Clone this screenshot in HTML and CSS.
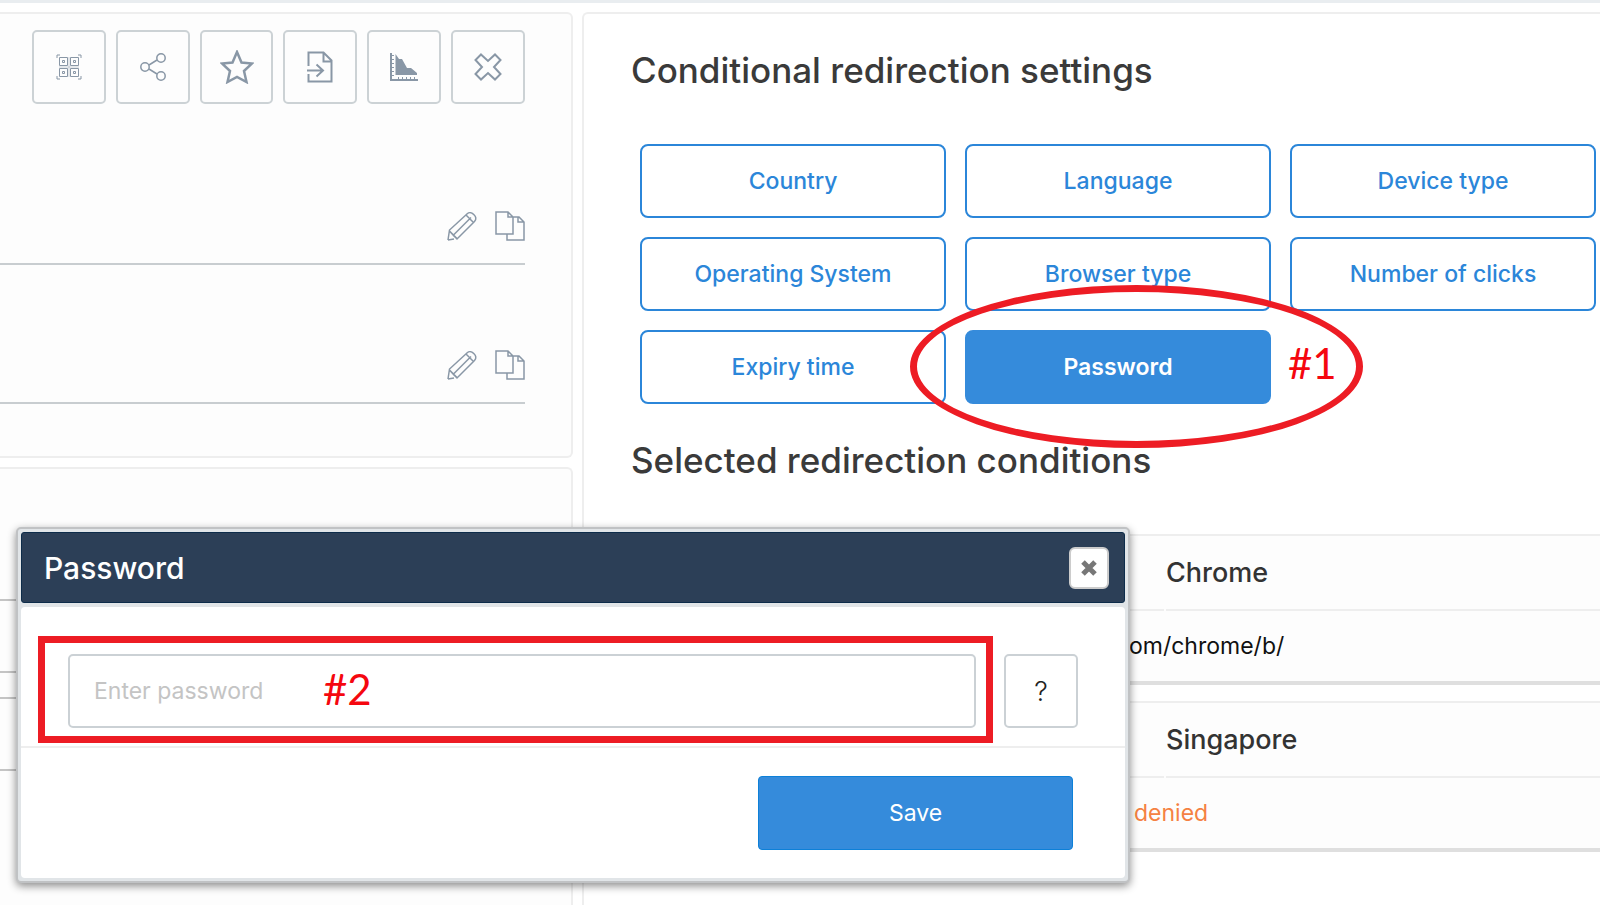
FILE: index.html
```html
<!DOCTYPE html>
<html lang="en">
  <head>
    <meta charset="UTF-8" />
    <meta name="viewport" content="width=device-width, initial-scale=1.0" />
    <title>Conditional redirection settings</title>
    <link rel="stylesheet" href="styles.css">
  </head>
  <body>
    <!-- Shared icons -->
    <svg class="sprite" aria-hidden="true">
      <symbol id="icon-pencil" viewBox="0 0 30 30">
        <path d="M1 29 2.500 19 20.500 2.500C24-.5 32 6 27.500 10.500L10 28 6.500 24.500 2.500 20M1 29l6-1M6.500 24 24 6.500M19 4l7.500 7.500M2.500 20l7.500 7.500" />
      </symbol>
      <symbol id="icon-copy" viewBox="0 0 30 30">
        <path d="M1 1h12l5 5v17H1zM13 1v5h5M18 6h6l5 5v18H12v-6M23 6v5h6" />
      </symbol>
    </svg>

    <div class="page">
      <div class="sidebar">
        <section class="panel link-panel">
          <div class="toolbar">
            <button class="tool-btn" aria-label="QR code">
              <svg width="26" height="26" viewBox="0 0 26 26" class="thin">
                <path d="M1 4V1h3M22 1h3v3M25 22v3h-3M4 25H1v-3" />
                <path d="M13 3v20M3 13h20" class="faint" />
                <path d="M3.500 3.500h8v8h-8zM14.500 3.500h8v8h-8zM3.500 14.500h8v8h-8zM14.500 14.500h8v8h-8z" />
                <path d="M6.500 6.500h2v2h-2zM17.500 6.500h2v2h-2zM6.500 17.500h2v2h-2zM17.500 17.500h2v2h-2z" />
              </svg>
            </button>
            <button class="tool-btn" aria-label="Share">
              <svg width="26" height="28" viewBox="0 0 26 28">
                <circle cx="5" cy="14" r="4.200" /><circle cx="21" cy="5" r="4.200" /><circle cx="21" cy="23" r="4.200" />
                <path d="m9 12 8-5M9 16l8 5" />
              </svg>
            </button>
            <button class="tool-btn" aria-label="Favourite">
              <svg width="34" height="34" viewBox="0 0 34 34" class="bold">
                <path d="m17 2 4.500 10.500L32 13.500l-8 7.500 2.500 11L17 27l-9.500 5L10 21l-8-7.500 10.500-1z" />
              </svg>
            </button>
            <button class="tool-btn" aria-label="Export">
              <svg width="26" height="32" viewBox="0 0 26 32" class="medium">
                <path d="M1.500 15V1.500h15l8 8V30.500h-23V23M16.500 1.500v9h8M0 19.500h16M9.500 13.500l6.500 6-6.500 6" />
              </svg>
            </button>
            <button class="tool-btn" aria-label="Statistics">
              <svg width="28" height="28" viewBox="0 0 28 28" class="solid">
                <path d="M0 0h2v26h26v2H0zM5.500 1 9 6h3l5 9h4l6 5v2H5.500z" />
                <path d="M2 2h2v1H2zM2 6h2v1H2zM2 10h2v1H2zM2 14h2v1H2zM2 18h2v1H2zM2 22h2v1H2zM8 24h1v2H8zM12 24h1v2h-1zM16 24h1v2h-1zM20 24h1v2h-1zM24 24h1v2h-1z" />
              </svg>
            </button>
            <button class="tool-btn" aria-label="Delete">
              <svg width="28" height="28" viewBox="0 0 28 28" class="medium">
                <path d="m7 1.500 7 6.500 7-6.500L26.500 7 20 14l6.500 7-5.500 5.500-7-6.500-7 6.500L1.500 21 8 14 1.500 7z" />
              </svg>
            </button>
          </div>
          <div class="field-row">
            <button class="icon-btn" aria-label="Edit"><svg width="30" height="30"><use href="#icon-pencil" /></svg></button>
            <button class="icon-btn" aria-label="Copy"><svg width="30" height="30"><use href="#icon-copy" /></svg></button>
          </div>
          <div class="field-row">
            <button class="icon-btn" aria-label="Edit"><svg width="30" height="30"><use href="#icon-pencil" /></svg></button>
            <button class="icon-btn" aria-label="Copy"><svg width="30" height="30"><use href="#icon-copy" /></svg></button>
          </div>
        </section>
        <section class="panel list-panel">
          <div class="list-item"></div>
          <div class="list-item"></div>
        </section>
      </div>

      <main class="panel settings">
        <h2 class="heading">Conditional redirection settings</h2>
        <div class="conditions">
          <button class="condition-btn">Country</button>
          <button class="condition-btn">Language</button>
          <button class="condition-btn">Device type</button>
          <button class="condition-btn">Operating System</button>
          <button class="condition-btn">Browser type</button>
          <button class="condition-btn">Number of clicks</button>
          <button class="condition-btn">Expiry time</button>
          <button class="condition-btn active">Password</button>
        </div>
        <h2 class="heading">Selected redirection conditions</h2>
        <div class="rules">
          <article class="rule">
            <div class="rule-head"><span></span><h3>Chrome</h3></div>
            <p class="rule-body">om/chrome/b/</p>
          </article>
          <article class="rule">
            <div class="rule-head"><span></span><h3>Singapore</h3></div>
            <p class="rule-body denied">denied</p>
          </article>
        </div>
      </main>
    </div>

    <!-- Step 1 -->
    <div class="mark-ellipse"></div>
    <span class="mark-label step-one">#1</span>

    <!-- Password dialog -->
    <div class="dialog" role="dialog" aria-labelledby="dialog-title">
      <div class="dialog-header">
        <h2 id="dialog-title">Password</h2>
        <button class="close-btn" aria-label="Close">
          <svg width="18" height="18" viewBox="0 0 18 18"><path d="m3 3 12 12M15 3 3 15" /></svg>
        </button>
      </div>
      <form class="dialog-body">
        <div class="input-row">
          <input type="text" class="password-input" placeholder="Enter password" aria-label="Enter password" />
          <button type="button" class="help-btn">?</button>
        </div>
        <div class="dialog-footer">
          <button type="button" class="save-btn">Save</button>
        </div>
      </form>
      <!-- Step 2 -->
      <div class="mark-box"></div>
      <span class="mark-label step-two">#2</span>
    </div>
  </body>
</html>
```
FILE: styles.css
```css
* {
  box-sizing: border-box;
}

body {
  margin: 0;
  height: 100vh;
  position: relative;
  overflow: hidden;
  font-family: Inter, sans-serif;
  font-size: 23px;
  color: #333;
  background: #fff;
  border-top: 3px solid #e9edf0;
}

h2,
h3,
p {
  margin: 0;
  font-weight: 500;
}

button,
input {
  font: inherit;
}

svg {
  display: block;
  fill: none;
  stroke: #8997a6;
  stroke-width: 1.5;
}

.sprite {
  position: absolute;
  width: 0;
  height: 0;
}

.page {
  display: grid;
  grid-template-columns: 573px 1fr;
  gap: 9px;
  height: 100%;
  padding-top: 9px;
}

.panel {
  background: #fdfdfd;
  border: 2px solid #eee;
  border-radius: 6px;
}

/* Left column */
.sidebar {
  display: flex;
  flex-direction: column;
  gap: 9px;
}

.link-panel,
.list-panel {
  border-left: none;
  border-top-left-radius: 0;
  border-bottom-left-radius: 0;
}

.link-panel {
  padding: 16px 46px 52px 0;
}

.toolbar {
  display: flex;
  gap: 10px;
  padding-left: 32px;
  margin-bottom: 22px;
}

.tool-btn {
  flex: 1;
  height: 74px;
  display: flex;
  align-items: center;
  justify-content: center;
  padding: 0;
  background: #fdfdfd;
  border: 2px solid #ccd2d5;
  border-radius: 5px;
}

.tool-btn .thin {
  stroke-width: 1;
}

.tool-btn .faint {
  opacity: 0.4;
}

.tool-btn .medium {
  stroke-width: 2;
}

.tool-btn .bold {
  stroke-width: 2.5;
}

.tool-btn .solid {
  fill: #8997a6;
  stroke: none;
}

.field-row {
  display: flex;
  justify-content: flex-end;
  align-items: flex-end;
  gap: 18px;
  height: 139px;
  padding-bottom: 22px;
  border-bottom: 2px solid #c8cdd0;
}

.icon-btn {
  padding: 0;
  border: none;
  background: none;
}

.list-panel {
  flex: 1;
  border-bottom: none;
  border-bottom-right-radius: 0;
  padding: 130px 46px 0 0;
}

.list-item {
  height: 74px;
  margin-bottom: 24px;
  border: 2px solid #c4c4c4;
  border-left: none;
}

/* Right column */
.settings {
  border-right: none;
  border-bottom: none;
  border-radius: 6px 0 0 0;
  background: #fff;
  padding: 33px 0 0 47px;
}

.heading {
  font-size: 35px;
  line-height: 46px;
  color: #3a3a3a;
}

.conditions {
  display: grid;
  grid-template-columns: repeat(3, 1fr);
  gap: 19px;
  padding: 51px 4px 33px 9px;
}

.condition-btn {
  height: 74px;
  padding: 0;
  font-weight: 500;
  color: #2b86d9;
  background: #fff;
  border: 2px solid #2b86d9;
  border-radius: 8px;
}

.condition-btn.active {
  color: #fff;
  font-weight: 600;
  background: #358bdb;
  border-color: #358bdb;
}

.rules {
  padding-top: 51px;
}

.rule {
  margin-bottom: 16px;
  background: #fdfdfd;
  border-top: 2px solid #eee;
  border-bottom: 4px solid #dfdfdf;
}

.rule-head {
  display: grid;
  grid-template-columns: 533px 1fr;
  gap: 2px;
  height: 75px;
}

.rule-head > * {
  border-bottom: 2px solid #eee;
}

.rule-head h3 {
  font-size: 27px;
  line-height: 73px;
}

.rule-body {
  height: 70px;
  padding-left: 498px;
  line-height: 70px;
  font-weight: 400;
  color: #111;
}

.rule-body.denied {
  padding-left: 503px;
  color: #f58142;
}

/* Dialog */
.dialog {
  position: absolute;
  left: 16px;
  top: 524px;
  width: 1114px;
  padding: 3px;
  background: #e1e5e8;
  border: 2px solid #c0c2c4;
  border-radius: 5px;
  box-shadow: 0 3px 8px rgba(0, 0, 0, 0.45);
}

.dialog-header {
  display: flex;
  align-items: center;
  justify-content: space-between;
  height: 71px;
  padding: 0 15px 0 22px;
  background: #2c3f57;
  border: 1px solid #0d2c4a;
  border-radius: 3px;
}

.dialog-header h2 {
  font-size: 30px;
  color: #fff;
}

.close-btn {
  display: flex;
  align-items: center;
  justify-content: center;
  width: 40px;
  height: 42px;
  padding: 0;
  background: #fff;
  border: 2px solid #ccc;
  border-radius: 6px;
}

.close-btn svg {
  stroke: #777;
  stroke-width: 5;
}

.dialog-body {
  margin-top: 4px;
  background: #fff;
  border-radius: 4px;
}

.input-row {
  display: flex;
  gap: 28px;
  padding: 47px 47px 18px 47px;
  border-bottom: 2px solid #eee;
}

.password-input {
  flex: 1;
  height: 74px;
  padding: 0 24px;
  background: #fff;
  border: 2px solid #cbd1d5;
  border-radius: 5px;
}

.password-input::placeholder {
  color: #c4c4c4;
}

.help-btn {
  width: 74px;
  height: 74px;
  font-size: 27px;
  font-weight: 300;
  color: #222;
  background: #fff;
  border: 2px solid #cbd1d5;
  border-radius: 5px;
}

.dialog-footer {
  display: flex;
  justify-content: flex-end;
  padding: 28px 52px;
}

.save-btn {
  width: 315px;
  height: 74px;
  color: #fff;
  background: #358bdb;
  border: 1px solid #0d80d8;
  border-radius: 4px;
}

/* Step marks */
.mark-ellipse {
  position: absolute;
  left: 910px;
  top: 282px;
  width: 453px;
  height: 163px;
  border: 7px solid #ed1c24;
  border-radius: 50%;
}

.mark-box {
  position: absolute;
  left: 20px;
  top: 107px;
  width: 955px;
  height: 107px;
  border: 7px solid #ed1c24;
  pointer-events: none;
}

.mark-label {
  position: absolute;
  font-family: Lato, sans-serif;
  font-size: 42px;
  line-height: 50px;
  color: #f5070f;
}

.step-one {
  left: 1288px;
  top: 335px;
}

.step-two {
  left: 305px;
  top: 135px;
}
```
